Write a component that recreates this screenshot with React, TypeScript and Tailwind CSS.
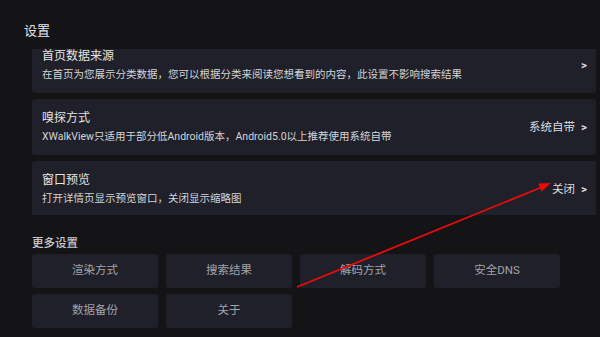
const App = () => {
  return (
    <div
      className="relative w-[600px] h-[337px] overflow-hidden bg-[#141417] text-[#e2e2e4]"
      style={{ fontFamily: "Roboto, 'Noto Sans CJK SC', sans-serif" }}
    >
      <p className="pl-[24px] pt-[22px] text-[13px]/[18px] text-[#e6e6e8]">设置</p>

      {/* Settings list (scrolled) */}
      <div className="mt-[9px] ml-[32px] mr-[4px] h-[166px] overflow-hidden">
        <div className="-mt-[12px] flex flex-col gap-[6px]">
          {items.map(({ title, desc, value }) => (
            <div
              key={title}
              className="h-[56px] rounded-[3px] bg-[#1f2029] pl-[10px] pr-[9px] flex items-center justify-between"
            >
              <div className="flex flex-col gap-[4px]">
                <p className="text-[12px]/[16px] text-[#e4e4e6]">{title}</p>
                <p className="text-[10.5px]/[14px] text-[#d4d4d8]">{desc}</p>
              </div>
              <div className="flex items-center gap-[6px] text-[11.5px]/[16px] text-[#dcdce0]">
                {value && <span>{value}</span>}
                <span className="font-bold">&gt;</span>
              </div>
            </div>
          ))}
        </div>
      </div>

      {/* More settings */}
      <p className="ml-[32px] mt-[20px] mb-[3px] text-[11.5px]/[16px] font-medium text-[#c9c9cd]">
        更多设置
      </p>
      <div className="ml-[32px] grid grid-cols-[repeat(4,126px)] gap-x-[8px] gap-y-[6px]">
        {buttons.map((b) => (
          <div
            key={b}
            className="h-[34px] rounded-[3px] bg-[#1f2029] flex items-center justify-center text-[11.5px] text-[#a2a3aa]"
          >
            {b}
          </div>
        ))}
      </div>

      {/* Annotation arrow */}
      <svg
        className="absolute inset-0 pointer-events-none"
        width="600"
        height="337"
        viewBox="0 0 600 337"
      >
        <line x1="297" y1="287" x2="541" y2="187.5" stroke="#ee0a0a" strokeWidth="1.8" />
        <polygon points="551,183 541.6,191.4 538.3,183.5" fill="#ee0a0a" />
      </svg>
    </div>
  );
};

const items = [
  {
    title: "首页数据来源",
    desc: "在首页为您展示分类数据，您可以根据分类来阅读您想看到的内容，此设置不影响搜索结果",
    value: "",
  },
  {
    title: "嗅探方式",
    desc: "XWalkView只适用于部分低Android版本，Android5.0以上推荐使用系统自带",
    value: "系统自带",
  },
  {
    title: "窗口预览",
    desc: "打开详情页显示预览窗口，关闭显示缩略图",
    value: "关闭",
  },
];

const buttons = ["渲染方式", "搜索结果", "解码方式", "安全DNS", "数据备份", "关于"];

export default App;
